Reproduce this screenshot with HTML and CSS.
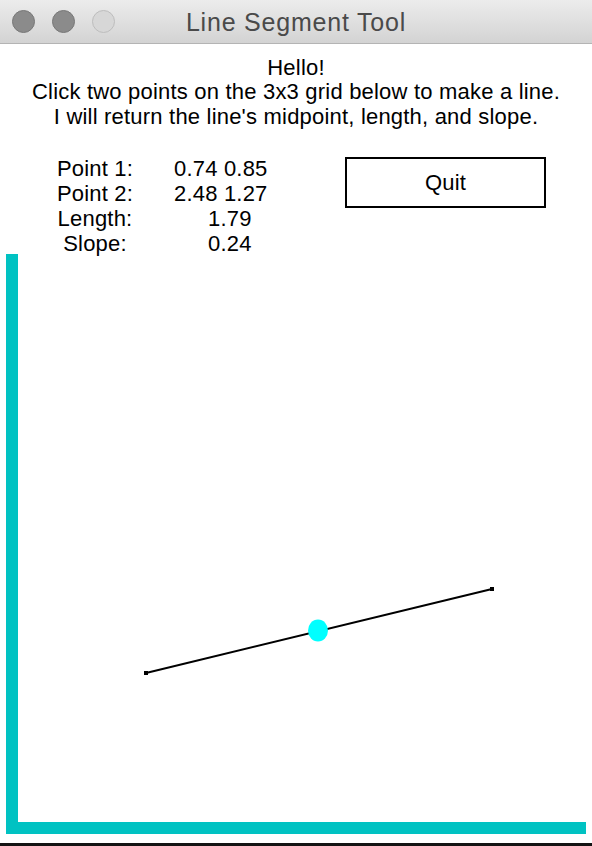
FILE: index.html
```html
<!DOCTYPE html>
<html>
<head>
<meta charset="utf-8">
<title>Line Segment Tool</title>
<link rel="stylesheet" href="styles.css">
</head>
<body>
<div class="window">
  <header class="titlebar">
    <div class="lights">
      <span class="light dark"></span>
      <span class="light dark"></span>
      <span class="light pale"></span>
    </div>
    <div class="title">Line Segment Tool</div>
  </header>
  <section class="top">
    <div class="greeting">
      <div>Hello!</div>
      <div>Click two points on the 3x3 grid below to make a line.</div>
      <div>I will return the line's midpoint, length, and slope.</div>
    </div>
    <div class="info">
      <div class="stats">
        <div class="label">Point 1:</div><div class="value">0.74 0.85</div>
        <div class="label">Point 2:</div><div class="value">2.48 1.27</div>
        <div class="label">Length:</div><div class="value short">1.79</div>
        <div class="label">Slope:</div><div class="value short">0.24</div>
      </div>
      <button class="quit">Quit</button>
    </div>
  </section>
  <svg class="canvas" width="592" height="589" viewBox="0 0 592 589">
    <rect x="6" y="0" width="12" height="580" fill="#00c2c2"/>
    <rect x="6" y="568" width="580" height="12" fill="#00c2c2"/>
    <line x1="146" y1="419" x2="492" y2="335" stroke="#000" stroke-width="2"/>
    <rect x="144" y="417" width="4" height="4" fill="#000"/>
    <rect x="490" y="333" width="4" height="4" fill="#000"/>
    <ellipse cx="318" cy="376.5" rx="10" ry="11" fill="#00ffff"/>
  </svg>
  <div class="edge"></div>
</div>
</body>
</html>
```
FILE: styles.css
```css
html, body {
  margin: 0;
  padding: 0;
  background: #ffffff;
}
.window {
  width: 592px;
  height: 846px;
  overflow: hidden;
  display: flex;
  flex-direction: column;
  font-family: "Liberation Sans", Arial, sans-serif;
  color: #000;
}
.titlebar {
  height: 43px;
  border-bottom: 1px solid #b4b4b4;
  background: linear-gradient(#ececec, #d3d3d3);
  position: relative;
  display: flex;
  align-items: center;
  justify-content: center;
  flex-shrink: 0;
}
.lights {
  position: absolute;
  left: 12px;
  top: 10px;
  display: flex;
  gap: 17px;
}
.light {
  width: 21px;
  height: 21px;
  border-radius: 50%;
  border: 1px solid #787878;
  background: #8b8b8b;
}
.light.pale {
  background: #d7d7d7;
  border-color: #bdbdbd;
}
.title {
  font-size: 25px;
  color: #4a4a4a;
  letter-spacing: 0.8px;
  margin-top: 1px;
}
.top {
  height: 210px;
  flex-shrink: 0;
  box-sizing: border-box;
  padding-top: 11.75px;
}
.greeting {
  text-align: center;
  font-size: 22px;
  letter-spacing: 0.2px;
  line-height: 24.5px;
}
.info {
  display: flex;
  align-items: flex-start;
  margin-top: 26.25px;
}
.stats {
  display: grid;
  grid-template-columns: 110px auto;
  margin-left: 40px;
  font-size: 22px;
  letter-spacing: 0.2px;
  line-height: 25px;
}
.label {
  text-align: center;
}
.value {
  padding-left: 24px;
}
.value.short {
  padding-left: 58px;
}
.quit {
  margin-left: auto;
  margin-right: 46px;
  margin-top: 1.5px;
  width: 201px;
  height: 51px;
  box-sizing: border-box;
  border: 2px solid #000;
  background: #fff;
  font-family: "Liberation Sans", Arial, sans-serif;
  font-size: 22px;
  letter-spacing: 0.2px;
  color: #000;
  padding: 0;
}
.canvas {
  display: block;
  flex-shrink: 0;
}
.edge {
  height: 3px;
  background: #141414;
  flex-shrink: 0;
}
```
